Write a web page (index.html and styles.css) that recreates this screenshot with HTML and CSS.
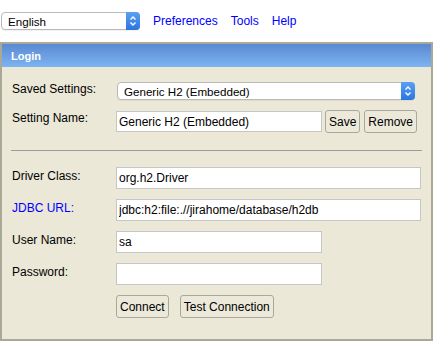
FILE: index.html
```html
<!DOCTYPE html>
<html lang="en">
<head>
    <meta charset="UTF-8">
    <title>H2 Console - Login</title>
    <link rel="stylesheet" href="styles.css">
</head>
<body>
    <div class="toolbar">
        <div class="select-box lang">
            <select><option>English</option></select>
            <span class="arrows"><svg width="14" height="18" viewBox="0 0 14 18"><path d="M4.5 7.5 L7 5 L9.5 7.5 M4.5 10.5 L7 13 L9.5 10.5" fill="none" stroke="#fff" stroke-width="1.4"/></svg></span>
        </div>
        <a href="#">Preferences</a>
        <a href="#">Tools</a>
        <a href="#">Help</a>
    </div>
    <div class="panel">
        <div class="panel-head">Login</div>
        <div class="panel-body">
            <div class="row">
                <label>Saved Settings:</label>
                <div class="select-box wide">
                    <select><option>Generic H2 (Embedded)</option></select>
                    <span class="arrows"><svg width="14" height="18" viewBox="0 0 14 18"><path d="M4.5 7.5 L7 5 L9.5 7.5 M4.5 10.5 L7 13 L9.5 10.5" fill="none" stroke="#fff" stroke-width="1.4"/></svg></span>
                </div>
            </div>
            <div class="row name-row">
                <label>Setting Name:</label>
                <input class="short" type="text" value="Generic H2 (Embedded)">
                <button class="btn-save">Save</button>
                <button class="btn-remove">Remove</button>
            </div>
            <hr>
            <div class="row field">
                <label>Driver Class:</label>
                <input class="long" type="text" value="org.h2.Driver">
            </div>
            <div class="row field">
                <label class="link-label">JDBC URL:</label>
                <input class="long" type="text" value="jdbc:h2:file:.//jirahome/database/h2db">
            </div>
            <div class="row field">
                <label>User Name:</label>
                <input class="short" type="text" value="sa">
            </div>
            <div class="row field">
                <label>Password:</label>
                <input class="short" type="password" value="">
            </div>
            <div class="row actions">
                <span class="spacer"></span>
                <button>Connect</button>
                <button class="btn-test">Test Connection</button>
            </div>
        </div>
    </div>
</body>
</html>
```

FILE: styles.css
```css
body {
    margin: 0;
    background: #fff;
    font-family: 'Liberation Sans', Arial, sans-serif;
    font-size: 12px;
    color: #000;
}
.toolbar {
    display: flex;
    align-items: center;
    height: 18px;
    padding: 12px 0 0 1px;
}
.toolbar a {
    color: #0000ff;
    text-decoration: none;
    margin-left: 13px;
    line-height: 14px;
}
.select-box {
    display: flex;
    box-sizing: border-box;
    height: 18px;
    border: 1px solid #b9b9b9;
    border-radius: 4px;
    background: #fff;
    box-shadow: 0 1px 1px rgba(0,0,0,0.06);
}
.select-box.lang { width: 139px; }
.select-box.wide { width: 298px; margin-left: 1px; }
.select-box select {
    appearance: none;
    -webkit-appearance: none;
    flex: 1;
    min-width: 0;
    border: none;
    background: transparent;
    font-family: 'Liberation Sans', Arial, sans-serif;
    font-size: 11.6px;
    color: #000;
    padding: 0 0 0 6px;
    height: 16px;
    outline: none;
}
.select-box .arrows {
    flex: 0 0 14px;
    height: 18px;
    margin: -1px -1px -1px 0;
    border-radius: 0 4px 4px 0;
    background: linear-gradient(#5aa0f2, #2c75e0);
}
.select-box .arrows svg { display: block; }
.panel {
    width: 433px;
    box-sizing: border-box;
    margin-top: 12px;
    border: 2px solid #aaa897;
    background: #ebe8d8;
}
.panel-head {
    height: 23px;
    line-height: 24px;
    padding-left: 9px;
    background: linear-gradient(#5a89d2, #7db4f1);
    color: #fff;
    font-weight: bold;
    font-size: 11px;
}
.panel-body {
    padding: 15px 10px 21px 10px;
}
.row {
    display: flex;
    align-items: flex-start;
    margin-bottom: 10px;
}
.row label {
    flex: 0 0 104px;
    line-height: 14px;
}
.row .link-label { color: #0000ff; }
.name-row {
    align-items: center;
}
.name-row label {
    align-self: flex-start;
    padding-top: 1px;
}
.name-row input { height: 21px; }
.field label { padding-top: 2px; }
input {
    box-sizing: border-box;
    height: 22px;
    margin: 0;
    border: 1px solid #c6c6c6;
    padding: 0 2px;
    background: #fff;
    font-family: 'Liberation Sans', Arial, sans-serif;
    font-size: 12px;
    color: #000;
}
input.long { width: 306px; }
input.short { width: 206px; }
button {
    box-sizing: border-box;
    height: 23px;
    margin: 0;
    padding: 0 3px;
    border: 1px solid #aaa89a;
    border-radius: 3px;
    background: #ece9da;
    font-family: 'Liberation Sans', Arial, sans-serif;
    font-size: 12px;
    color: #000;
}
.btn-save { margin-left: 3px; }
.btn-remove { margin-left: 4px; }
.btn-test { margin-left: 11px; }
.actions { margin-bottom: 0; }
.spacer { flex: 0 0 104px; }
hr {
    width: 411px;
    height: 0;
    border: 0;
    border-top: 1px solid #9c9c9c;
    margin: 17px 0 16px -1px;
}
```
